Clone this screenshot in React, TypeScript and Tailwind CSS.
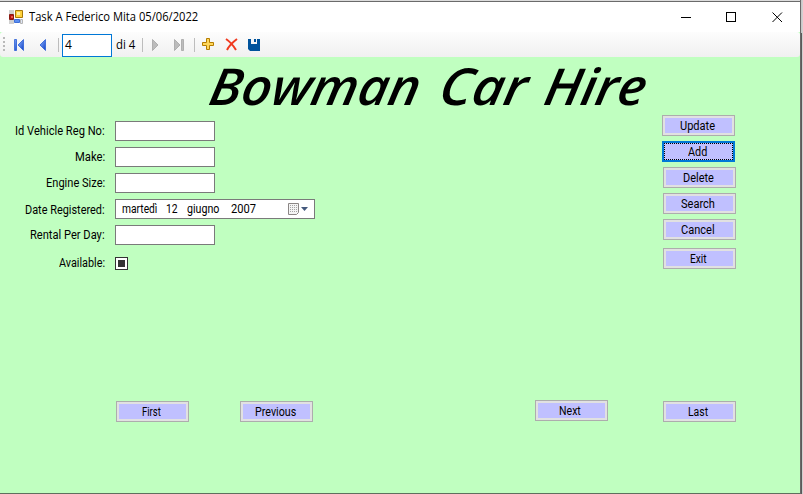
import React from "react";

const ui = "font-['Roboto','Liberation_Sans',sans-serif]";

function Fit({ text, width, size = 12, className = "" }: { text: string; width: number; size?: number; className?: string }) {
  const ref = React.useRef<HTMLSpanElement>(null);
  const [scale, setScale] = React.useState(1);
  React.useLayoutEffect(() => {
    if (ref.current) setScale(width / ref.current.offsetWidth);
  }, [width]);
  return (
    <span className={`inline-block whitespace-pre ${className}`} style={{ width, fontSize: size }}>
      <span ref={ref} className="inline-block origin-left" style={{ transform: `scaleX(${scale})` }}>
        {text}
      </span>
    </span>
  );
}

function Btn({ label, w, focused = false, className = "" }: { label: string; w: number; focused?: boolean; className?: string }) {
  return (
    <button
      className={`box-border flex h-[21px] w-[73px] shrink-0 items-center justify-center leading-none ${
        focused ? "border-2 border-[#0078d7] bg-[#c0c0ff]" : "border border-[#adadad] bg-[#e1e1e1] p-[2px]"
      } ${className}`}
    >
      <span
        className={`flex h-full w-full items-center justify-center bg-[#c0c0ff] pt-[2px] pr-[3px] ${focused ? "border border-dotted border-black" : ""}`}
      >
        <Fit text={label} width={w} className="leading-[13px]" />
      </span>
    </button>
  );
}

function Row({ label, w, gap, labelClass = "", children }: { label: string; w: number; gap: string; labelClass?: string; children: React.ReactNode }) {
  return (
    <div className={`flex items-center ${gap}`}>
      <div className={`mr-[10px] flex w-[105px] justify-end leading-[14px] ${labelClass}`}>
        <Fit text={label} width={w} />
      </div>
      {children}
    </div>
  );
}

const Field = () => <input readOnly className="block h-5 w-[100px] border border-[#7a7a7a] bg-white" />;

export default function App() {
  return (
    <div className={`flex h-[494px] w-[803px] overflow-hidden bg-[#c0ffc0] text-black ${ui}`}>
      <div className="flex h-full w-[800px] flex-col">
        <div className="h-px shrink-0 bg-[#dcdcdc]" />
        <header className="flex h-[31px] shrink-0 items-center border-t border-[#6b6b6b] bg-white pl-[9px] font-['Open_Sans','Noto_Sans',sans-serif]">
          <svg width="14" height="14" viewBox="0 0 14 14" className="mr-[6px]">
            <path d="M0 0h5v4H0zM0 10h5v4H0z" fill="#d0d0d0" />
            <path d="M.5 4.500h4v5h-4z" fill="#b81414" stroke="#8a1a12" />
            <path d="M2 6h2v2H2z" fill="#e85a48" />
            <path d="M6.500 .500h7v7h-7z" fill="#ffd23c" stroke="#a87908" />
            <path d="M8 2h3v3H8z" fill="#fff0a0" />
            <path d="M5.500 9.500h5v3h-5z" fill="#5b8ef0" stroke="#3e6fd8" />
            <path d="M11.500 9.500h2v4h-2z" fill="#dfe6f5" stroke="#b5b5b5" />
          </svg>
          <Fit text="Task A Federico Mita 05/06/2022" width={169.5} className="leading-4" />
          <svg width="110" height="14" viewBox="0 0 110 14" className="ml-auto mr-[14px]" shapeRendering="crispEdges">
            <path d="M5 7.500h10" stroke="#000" fill="none" />
            <path d="M50.500 2.500h9v9h-9z" stroke="#000" fill="none" />
            <path d="M96.500 2.500l9.500 9.500M106 2.500l-9.500 9.500" stroke="#000" fill="none" shapeRendering="auto" />
          </svg>
        </header>
        <div className="flex h-[25px] shrink-0 items-center rounded-[3px] bg-linear-to-b from-[#fdfdfd] to-[#f0f0f0] pl-[3px]">
          <svg width="58" height="24" viewBox="0 0 58 24">
            <defs>
              <linearGradient id="blue" x1="0" x2="1" y1="0" y2="1">
                <stop offset="0" stopColor="#8db6ff" />
                <stop offset="1" stopColor="#1140c4" />
              </linearGradient>
            </defs>
            <path d="M0 4h2v2H0zM0 8h2v2H0zM0 12h2v2H0zM0 16h2v2H0z" fill="#b9b9b9" />
            <path d="M11.500 6.500h2v11h-2z" fill="url(#blue)" stroke="#2c5fd6" strokeWidth=".8" />
            <path d="M20.500 6.500v11L15 12z" fill="url(#blue)" stroke="#2c5fd6" strokeWidth=".8" />
            <path d="M42.500 6.500v11L37 12z" fill="url(#blue)" stroke="#2c5fd6" strokeWidth=".8" />
            <path d="M55.500 5v14" stroke="#bdbdbd" />
          </svg>
          <div className="mt-px ml-px flex h-[23px] w-[50px] items-center border border-[#0078d7] bg-white pb-px pl-[2px] font-['Open_Sans',sans-serif] text-[12px]">4</div>
          <Fit text="di 4" width={19} className="ml-1 font-['Open_Sans',sans-serif]" />
          <svg width="130" height="24" viewBox="0 0 130 24" className="ml-[5px]">
            <path d="M2.500 5v14M54.500 5v14" stroke="#bdbdbd" />
            <path d="M12.500 6.500v11L18 12z" fill="#bcbcbc" stroke="#a5a5a5" strokeWidth=".8" />
            <path d="M34.500 6.500v11L40 12zM41.500 6.500h2v11h-2z" fill="#bcbcbc" stroke="#a5a5a5" strokeWidth=".8" />
            <path d="M66.500 5.500h3v4h4v3h-4v4h-3v-4h-4v-3h4z" fill="#ffd75a" stroke="#b57d00" />
            <path d="M86 6c3 2 7 6 10 11M97 6c-4 3-8 7-10 11" fill="none" stroke="#f03a20" strokeWidth="2" />
            <path d="M108 6h12v12h-10l-2-2z" fill="#00539c" />
            <path d="M111 6h6v5h-6z" fill="#f5f5f5" />
            <path d="M114 6h2v3h-2z" fill="#00539c" />
          </svg>
        </div>
        <main className="flex h-[437px] shrink-0 flex-col border-b border-[#5e705e]">
          <h1 className="h-[64px] shrink-0">
            <svg width="800" height="64" viewBox="0 57 800 64" className="overflow-visible font-['Open_Sans','Noto_Sans',sans-serif] text-[51px] leading-none font-semibold italic">
              <g transform="translate(0 104.500) skewX(-11)">
                <text x="207" textLength="210" lengthAdjust="spacingAndGlyphs">Bowman</text>
                <text x="437" textLength="87" lengthAdjust="spacingAndGlyphs">Car</text>
                <text x="542" textLength="101" lengthAdjust="spacingAndGlyphs">Hire</text>
              </g>
            </svg>
          </h1>
          <div className="flex h-[279px] shrink-0 justify-between">
            <form>
              <Row label="Id Vehicle Reg No:" w={90} gap="mb-[6px]"><Field /></Row>
              <Row label="Make:" w={30} gap="mb-[6px]"><Field /></Row>
              <Row label="Engine Size:" w={59} gap="mb-[6px]"><Field /></Row>
              <Row label="Date Registered:" w={80} gap="mb-[6px]" labelClass="pt-[2px]">
                <div className="flex h-5 w-[200px] items-center border border-[#7a7a7a] bg-white pl-[6px] leading-none">
                  <Fit text="martedì" width={35} className="mr-[9px]" />
                  <Fit text="12" width={12} className="mr-[9px]" />
                  <Fit text="giugno" width={32} className="mr-[12px]" />
                  <Fit text="2007" width={25} />
                  <svg width="22" height="14" viewBox="0 0 22 14" className="mr-[4px] ml-auto">
                    <path d="M.5 1.500h10v9l-2 2h-8z" fill="#f4f4f4" stroke="#8b8685" />
                    <path d="M2 3.500h7M2 5.500h7M2 7.500h7M2 9.500h7" stroke="#a5a5a5" strokeDasharray="1 1" />
                    <path d="M13 5h7l-3.500 4z" fill="#44597d" />
                  </svg>
                </div>
              </Row>
              <Row label="Rental Per Day:" w={75} gap="mb-[11px]"><Field /></Row>
              <Row label="Available:" w={46} gap="">
                <div className="flex h-[13px] w-[13px] items-center justify-center border border-[#333] bg-white">
                  <div className="h-[7px] w-[7px] bg-[#333]" />
                </div>
              </Row>
            </form>
            <div className="-mt-[6px] mr-16 flex flex-col items-end">
              <Btn label="Update" w={35} className="mr-px mb-[5px]" />
              <Btn label="Add" w={19} focused className="mr-px mb-[5px]" />
              <Btn label="Delete" w={31} className="mb-[5px]" />
              <Btn label="Search" w={34} className="mb-[5px]" />
              <Btn label="Cancel" w={34} className="mb-[8px]" />
              <Btn label="Exit" w={17} />
            </div>
          </div>
          <nav className="flex pl-[116px]">
            <Btn label="First" w={19} className="mt-px mr-[51px]" />
            <Btn label="Previous" w={41} className="mt-px mr-[222px]" />
            <Btn label="Next" w={22} className="mr-[55px]" />
            <Btn label="Last" w={20} className="mt-px" />
          </nav>
        </main>
      </div>
      <div className="h-full w-px bg-[#696969]" />
      <div className="flex h-full w-px flex-col bg-[#5a5a5a]"><div className="h-[33px] bg-[#c8c8c8]" /></div>
      <div className="h-full w-px bg-[#d0d0d0]" />
    </div>
  );
}
